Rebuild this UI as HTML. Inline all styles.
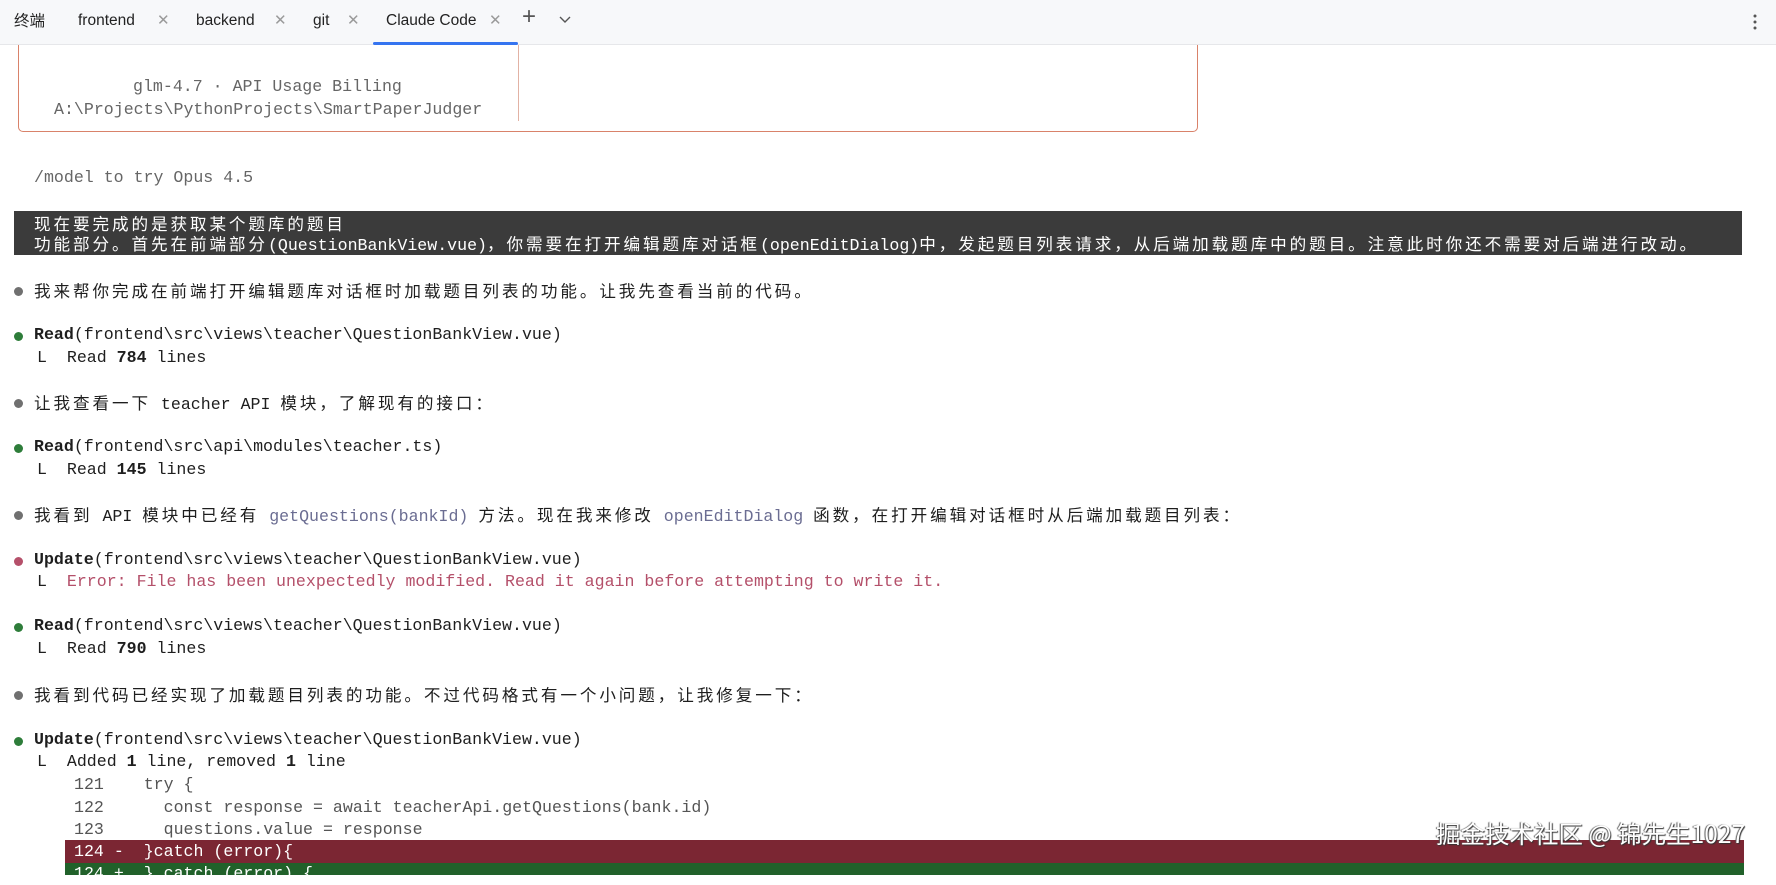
<!DOCTYPE html>
<html><head><meta charset="utf-8"><style>
*{margin:0;padding:0;box-sizing:border-box}
body{width:1776px;height:873px;overflow:hidden;background:#fff;position:relative;font-family:"Liberation Mono","Noto Sans CJK SC",monospace;font-size:16.6px;color:#1e1e1e}
.tabs{position:absolute;z-index:5;left:0;top:0;width:1776px;height:45px;background:#f7f8fa;border-bottom:1px solid #e6e7ea;font-family:"Liberation Sans","Noto Sans CJK SC",sans-serif;font-size:15.5px;color:#222}
.tabs span{position:absolute;top:10px;line-height:22px}
.tabs .x{color:#9a9a9a;font-size:15px}
.ul{position:absolute;left:373px;top:42px;width:145px;height:3px;background:#3574f0;border-radius:2px}
.box{position:absolute;left:18px;top:30px;width:1180px;height:102px;border:1.5px solid #d9826a;border-top:none;border-radius:0 0 5px 5px}
.div{position:absolute;left:518px;top:45px;width:1px;height:76px;background:#e2b2a4}
.l{position:absolute;white-space:pre;line-height:22px;height:22px}
.c{font-family:"Noto Sans CJK SC",sans-serif;letter-spacing:2.9px;font-size:16.6px}
.g{color:#666}
.dot{position:absolute;width:9px;height:9px;border-radius:50%}
.b{font-weight:bold}
.p{color:#6b6d92}
.e{color:#b4506a}
.dark{position:absolute;left:14px;top:211px;width:1728px;height:44px;background:#3b3b3b}
.code{color:#555}
</style></head><body>
<div class="tabs">
<span style="left:14px;top:11px;font-size:15.5px">终端</span>
<span style="left:78px">frontend</span><span class="x" style="left:157px">✕</span>
<span style="left:196px">backend</span><span class="x" style="left:274px">✕</span>
<span style="left:313px">git</span><span class="x" style="left:347px">✕</span>
<span style="left:386px">Claude Code</span><span class="x" style="left:489px">✕</span>
<span style="left:522px;font-size:24px;top:6px;color:#555;font-weight:300">+</span>
<svg style="position:absolute;left:558px;top:15px" width="14" height="10" viewBox="0 0 14 10"><path d="M2 2l5 5 5-5" fill="none" stroke="#555" stroke-width="1.4"/></svg>
<svg style="position:absolute;left:1752px;top:12px" width="6" height="20"><circle cx="3" cy="4" r="1.5" fill="#555"/><circle cx="3" cy="10" r="1.5" fill="#555"/><circle cx="3" cy="16" r="1.5" fill="#555"/></svg>
<div class="ul"></div>
</div>
<div class="box"></div><div class="div"></div>
<div class="l g" style="left:133px;top:76px">glm-4.7 · API Usage Billing</div>
<div class="l g" style="left:54px;top:99px">A:\Projects\PythonProjects\SmartPaperJudger</div>
<div class="l g" style="left:34px;top:167px">/model to try Opus 4.5</div>

<div class="dark"></div>
<div class="l" style="left:34px;top:212px;color:#fff"><span class="c">现在要完成的是获取某个题库的题目</span></div>
<div class="l" style="left:34px;top:232px;color:#fff"><span class="c">功能部分。首先在前端部分</span>(QuestionBankView.vue)<span class="c">，你需要在打开编辑题库对话框</span>(openEditDialog)<span class="c">中，发起题目列表请求，从后端加载题库中的题目。注意此时你还不需要对后端进行改动。</span></div>

<div class="dot" style="left:14px;top:287px;background:#707070"></div>
<div class="l" style="left:34px;top:279px"><span class="c">我来帮你完成在前端打开编辑题库对话框时加载题目列表的功能。让我先查看当前的代码。</span></div>

<div class="dot" style="left:14px;top:332px;background:#2e7d3a"></div>
<div class="l" style="left:34px;top:324px"><span class="b">Read</span>(frontend\src\views\teacher\QuestionBankView.vue)</div>
<div class="l" style="left:37px;top:347px">L  Read <span class="b">784</span> lines</div>

<div class="dot" style="left:14px;top:399px;background:#707070"></div>
<div class="l" style="left:34px;top:391px"><span class="c">让我查看一下</span> teacher API <span class="c">模块，了解现有的接口：</span></div>

<div class="dot" style="left:14px;top:444px;background:#2e7d3a"></div>
<div class="l" style="left:34px;top:436px"><span class="b">Read</span>(frontend\src\api\modules\teacher.ts)</div>
<div class="l" style="left:37px;top:459px">L  Read <span class="b">145</span> lines</div>

<div class="dot" style="left:14px;top:511px;background:#707070"></div>
<div class="l" style="left:34px;top:503px"><span class="c">我看到</span> API <span class="c">模块中已经有</span> <span class="p">getQuestions(bankId)</span> <span class="c">方法。现在我来修改</span> <span class="p">openEditDialog</span> <span class="c">函数，在打开编辑对话框时从后端加载题目列表：</span></div>

<div class="dot" style="left:14px;top:557px;background:#b5506a"></div>
<div class="l" style="left:34px;top:549px"><span class="b">Update</span>(frontend\src\views\teacher\QuestionBankView.vue)</div>
<div class="l" style="left:37px;top:571px">L  <span class="e">Error: File has been unexpectedly modified. Read it again before attempting to write it.</span></div>

<div class="dot" style="left:14px;top:623px;background:#2e7d3a"></div>
<div class="l" style="left:34px;top:615px"><span class="b">Read</span>(frontend\src\views\teacher\QuestionBankView.vue)</div>
<div class="l" style="left:37px;top:638px">L  Read <span class="b">790</span> lines</div>

<div class="dot" style="left:14px;top:691px;background:#707070"></div>
<div class="l" style="left:34px;top:683px"><span class="c">我看到代码已经实现了加载题目列表的功能。不过代码格式有一个小问题，让我修复一下：</span></div>

<div class="dot" style="left:14px;top:737px;background:#2e7d3a"></div>
<div class="l" style="left:34px;top:729px"><span class="b">Update</span>(frontend\src\views\teacher\QuestionBankView.vue)</div>
<div class="l" style="left:37px;top:751px">L  Added <span class="b">1</span> line, removed <span class="b">1</span> line</div>
<div class="l code" style="left:74px;top:774px">121    try {</div>
<div class="l code" style="left:74px;top:797px">122      const response = await teacherApi.getQuestions(bank.id)</div>
<div class="l code" style="left:74px;top:819px">123      questions.value = response</div>
<div style="position:absolute;left:65px;top:840px;width:1679px;height:23px;background:#7b2633"></div>
<div class="l" style="left:74px;top:841px;color:#fff">124 -  }catch (error){</div>
<div style="position:absolute;left:65px;top:863px;width:1679px;height:12px;background:#21612a"></div>
<div class="l" style="left:74px;top:863px;color:#fff">124 +  } catch (error) {</div>
<div style="position:absolute;left:1436px;top:818px;font-family:'Noto Sans CJK SC',sans-serif;font-size:24.5px;color:#fff;text-shadow:1px 1px 1px #333,-1px 0 1px #555;white-space:nowrap;line-height:32px">掘金技术社区 @ 锦先生1027</div>
</body></html>
